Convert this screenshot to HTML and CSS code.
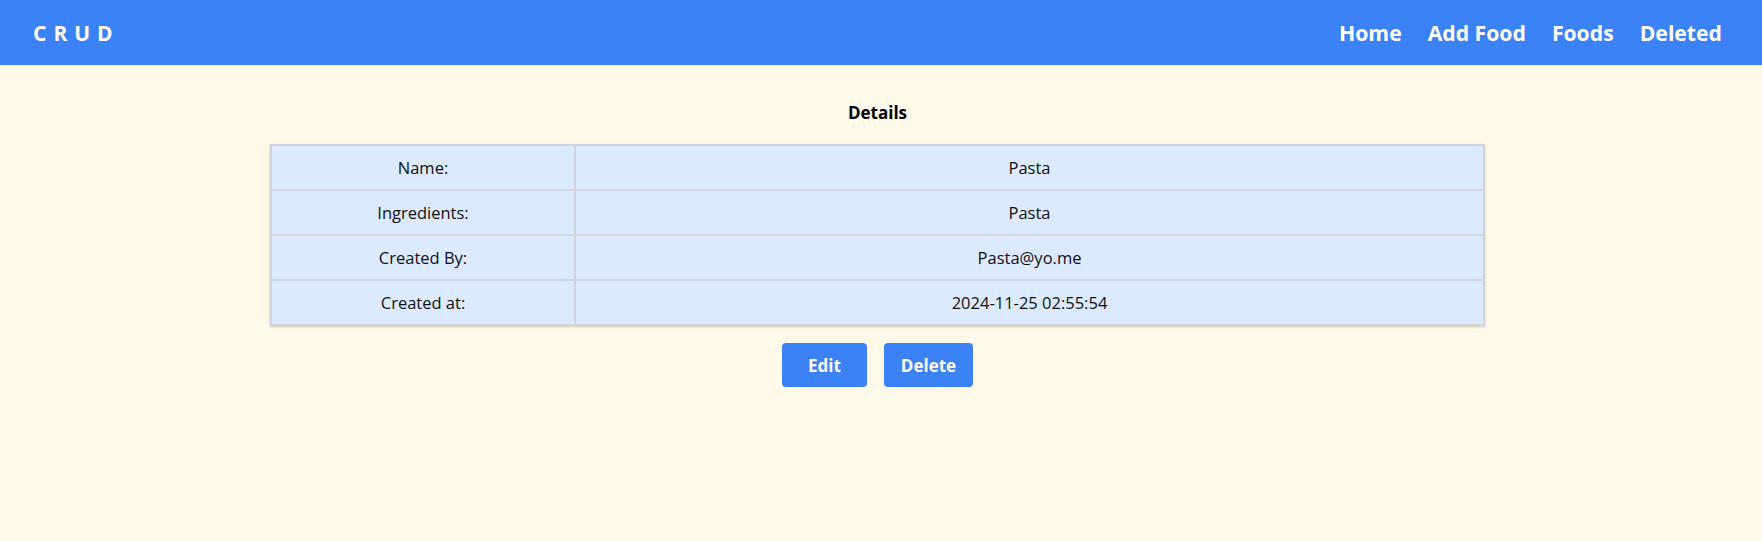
FILE: index.html
```html
<!DOCTYPE html>
<html lang="en">
<head>
<meta charset="utf-8">
<title>CRUD</title>
<link rel="stylesheet" href="styles.css">
</head>
<body>
<nav class="navbar">
  <div class="brand">CRUD</div>
  <ul class="nav-links">
    <li><a href="#">Home</a></li>
    <li><a href="#">Add Food</a></li>
    <li><a href="#">Foods</a></li>
    <li><a href="#">Deleted</a></li>
  </ul>
</nav>
<main class="page">
  <h2 class="title">Details</h2>
  <table class="details">
    <tbody>
      <tr><td class="label">Name:</td><td>Pasta</td></tr>
      <tr><td class="label">Ingredients:</td><td>Pasta</td></tr>
      <tr><td class="label">Created By:</td><td>Pasta@yo.me</td></tr>
      <tr><td class="label">Created at:</td><td>2024-11-25 02:55:54</td></tr>
    </tbody>
  </table>
  <div class="actions">
    <button class="btn btn-edit">Edit</button>
    <button class="btn btn-delete">Delete</button>
  </div>
</main>
</body>
</html>
```
FILE: styles.css
```css
* { box-sizing: border-box; }
html, body {
  margin: 0;
  padding: 0;
  height: 100%;
}
body {
  background: #fef9e8;
  font-family: "Open Sans", "Noto Sans", sans-serif;
  color: #111;
}
.navbar {
  height: 65px;
  background: #3b82f6;
  display: flex;
  align-items: center;
  justify-content: space-between;
  padding: 0 40px 0 33px;
}
.brand {
  color: #fff;
  font-weight: 700;
  font-size: 21px;
  letter-spacing: 7px;
}
.nav-links {
  list-style: none;
  margin: 0;
  padding: 0;
  display: flex;
  gap: 26px;
}
.nav-links a {
  color: #fff;
  text-decoration: none;
  font-weight: 700;
  font-size: 21.2px;
}
.page {
  padding-right: 7px;
  display: flex;
  flex-direction: column;
  align-items: center;
}
.title {
  margin: 36px 0 0;
  font-size: 17px;
  font-weight: 700;
  line-height: 24px;
  color: #000;
}
.details {
  margin-top: 19px;
  width: 1215px;
  border-collapse: collapse;
  box-shadow: 0 1px 3px rgba(0,0,0,0.12), 0 1px 2px rgba(0,0,0,0.08);
}
.details td {
  background: #dbeafe;
  border: 2px solid #d1d5db;
  height: 45px;
  padding: 0;
  text-align: center;
  font-size: 16.5px;
  color: #111;
}
.details td.label {
  width: 304px;
}
.actions {
  margin-top: 17px;
  display: flex;
  gap: 17px;
}
.btn {
  height: 44px;
  border: none;
  border-radius: 4px;
  background: #3b82f6;
  color: #fff;
  font-family: "Open Sans", "Noto Sans", sans-serif;
  font-weight: 700;
  font-size: 17px;
  padding: 0;
  cursor: pointer;
}
.btn-edit { width: 85px; }
.btn-delete { width: 89px; }
```
